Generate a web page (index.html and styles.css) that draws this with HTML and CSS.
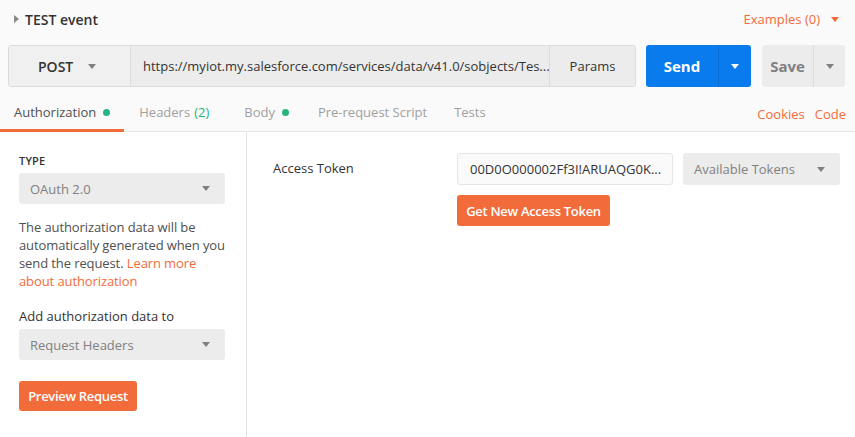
FILE: index.html
```html
<!DOCTYPE html>
<html>
<head>
<meta charset="utf-8">
<link rel="stylesheet" href="styles.css">
</head>
<body>
<div class="app">
  <div class="header">
    <div class="title"><span class="caret-right"></span>TEST event</div>
    <div class="examples">Examples (0) <span class="tri tri-orange"></span></div>
  </div>
  <div class="reqbar">
    <div class="urlgroup">
      <div class="method">POST <span class="tri tri-grey"></span></div>
      <div class="url">https://myiot.my.salesforce.com/services/data/v41.0/sobjects/Tes...</div>
      <div class="params">Params</div>
    </div>
    <div class="send">
      <div class="send-main">Send</div>
      <div class="send-drop"><span class="tri tri-white"></span></div>
    </div>
    <div class="save">
      <div class="save-main">Save</div>
      <div class="save-drop"><span class="tri tri-grey"></span></div>
    </div>
  </div>
  <div class="tabs">
    <div class="tab tab-auth active">Authorization <span class="dot"></span></div>
    <div class="tab tab-headers">Headers <span class="green">(2)</span></div>
    <div class="tab tab-body">Body <span class="dot"></span></div>
    <div class="tab tab-pre">Pre-request Script</div>
    <div class="tab tab-tests">Tests</div>
    <div class="tab-links"><span>Cookies</span><span>Code</span></div>
  </div>
  <div class="content">
    <div class="side">
      <div class="label-caps">TYPE</div>
      <div class="select">OAuth 2.0 <span class="tri tri-grey"></span></div>
      <p class="desc">The authorization data will be automatically generated when you send the request. <span class="link">Learn more about authorization</span></p>
      <div class="label">Add authorization data to</div>
      <div class="select">Request Headers <span class="tri tri-grey"></span></div>
      <div class="btn-orange preview">Preview Request</div>
    </div>
    <div class="main">
      <div class="row">
        <div class="field-label">Access Token</div>
        <div class="field-col">
          <div class="field-line">
            <div class="token-input">00D0O000002Ff3I!ARUAQG0K...</div>
            <div class="select tokens">Available Tokens <span class="tri tri-grey"></span></div>
          </div>
          <div class="btn-orange getnew">Get New Access Token</div>
        </div>
      </div>
    </div>
  </div>
</div>
</body>
</html>
```
FILE: styles.css
```css
* { box-sizing: border-box; }
html, body { margin: 0; padding: 0; }
body {
  font-family: "Open Sans", "Noto Sans", sans-serif;
  font-size: 13px;
  color: #505050;
  background: #fff;
  width: 855px;
  height: 437px;
  overflow: hidden;
}
.app { display: flex; flex-direction: column; height: 437px; }
.header {
  background: #fafafa;
  height: 38px;
  display: flex;
  align-items: center;
  justify-content: space-between;
  padding: 0 16px 0 14px;
}
.title { font-size: 14px; font-weight: 600; color: #333; display: flex; align-items: center; }
.caret-right {
  display: inline-block;
  width: 0; height: 0;
  border-top: 4px solid transparent;
  border-bottom: 4px solid transparent;
  border-left: 5px solid #888;
  margin-right: 6px;
}
.examples { color: #f26b3a; font-size: 13px; display: flex; align-items: center; }
.examples .tri { margin-left: 11px; }
.tri {
  display: inline-block;
  width: 0; height: 0;
  border-left: 4px solid transparent;
  border-right: 4px solid transparent;
  border-top: 5px solid #808080;
}
.tri-orange { border-top-color: #f26b3a; }
.tri-white { border-top-color: #fff; }
.tri-grey { border-top-color: #808080; }
.reqbar {
  background: #fafafa;
  display: flex;
  align-items: stretch;
  padding: 7px 10px 7px 8px;
  height: 56px;
}
.reqbar > div { height: 42px; }
.urlgroup {
  display: flex;
  width: 628px;
  border: 1px solid #dcdcdc;
  border-radius: 3px;
  background: #ececec;
}
.method {
  width: 122px;
  background: #f0f0f0;
  border-right: 1px solid #dcdcdc;
  display: flex;
  align-items: center;
  font-size: 14px;
  font-weight: 600;
  color: #333;
  gap: 15px;
  padding-left: 29px;
  border-radius: 3px 0 0 3px;
}
.url {
  flex: 1;
  display: flex;
  align-items: center;
  padding-left: 12px;
  color: #333;
  font-size: 13px;
  white-space: nowrap;
  overflow: hidden;
  background: #ececec;
}
.params {
  width: 86px;
  border-left: 1px solid #dcdcdc;
  background: #ececec;
  display: flex;
  align-items: center;
  justify-content: center;
  color: #333;
  border-radius: 0 3px 3px 0;
}
.send {
  margin-left: 10px;
  width: 105px;
  display: flex;
  background: #097bed;
  border-radius: 3px;
  color: #fff;
}
.send-main {
  width: 73px;
  display: flex;
  align-items: center;
  justify-content: center;
  font-weight: 700;
  font-size: 15px;
  border-right: 1px solid #0a6dd6;
}
.send-drop { flex: 1; display: flex; align-items: center; justify-content: center; }
.save {
  margin-left: 11px;
  width: 83px;
  display: flex;
  background: #ececec;
  border-radius: 3px;
  color: #808080;
}
.save-main {
  width: 52px;
  display: flex;
  align-items: center;
  justify-content: center;
  font-weight: 700;
  font-size: 15px;
  border-right: 1px solid #dcdcdc;
}
.save-drop { flex: 1; display: flex; align-items: center; justify-content: center; }
.tabs {
  background: #fafafa;
  height: 38px;
  display: flex;
  align-items: stretch;
  border-bottom: 1px solid #e6e6e6;
}
.tab {
  display: flex;
  align-items: center;
  color: #a0a0a0;
  position: relative;
  padding-bottom: 2px;
}
.tab-auth { padding-left: 14px; padding-right: 14px; }
.tab-headers { padding-left: 15px; padding-right: 17px; }
.tab-body { padding-left: 18px; padding-right: 14px; }
.tab-pre { padding-left: 15px; padding-right: 12px; }
.tab-tests { padding-left: 15px; padding-right: 14px; }
.tab.active { color: #505050; }
.tab.active::after {
  content: "";
  position: absolute;
  left: 0; right: 0; bottom: -1px;
  height: 3px;
  background: #f26b3a;
}
.dot { display: inline-block; width: 7px; height: 7px; border-radius: 50%; background: #26b47f; margin-left: 7px; margin-top: 1px; }
.green { color: #26b47f; margin-left: 4px; }
.tab-links { margin-left: auto; display: flex; align-items: center; gap: 10px; padding: 2px 9px 0 0; color: #f26b3a; }
.content { flex: 1; display: flex; }
.side {
  width: 247px;
  border-right: 1px solid #e6e6e6;
  padding: 21px 21px 0 19px;
}
.label-caps { font-size: 11px; font-weight: 600; color: #333; letter-spacing: 0.2px; margin-bottom: 4px; line-height: 16px; }
.select {
  height: 31px;
  background: #ececec;
  border-radius: 3px;
  display: flex;
  align-items: center;
  justify-content: space-between;
  padding: 0 15px 0 11px;
  color: #808080;
  font-size: 13px;
}
.desc { margin: 14px -4px 0 0; line-height: 18px; color: #505050; font-size: 13px; letter-spacing: -0.1px; }
.link { color: #f26b3a; }
.label { margin-top: 17px; margin-bottom: 4px; line-height: 18px; color: #333; }
.btn-orange {
  background: #f26b3a;
  color: #fff;
  font-weight: 600;
  border-radius: 3px;
  display: inline-flex;
  align-items: center;
  justify-content: center;
  height: 30px;
  font-size: 13px;
  letter-spacing: -0.3px;
}
.preview { margin-top: 21px; width: 118px; }
.main { flex: 1; padding: 21px 15px 0 26px; }
.row { display: flex; }
.field-label { width: 184px; padding-top: 6px; color: #333; }
.field-col { display: flex; flex-direction: column; align-items: flex-start; gap: 10px; }
.field-line { display: flex; gap: 10px; }
.token-input {
  width: 216px;
  height: 32px;
  border: 1px solid #e6e6e6;
  border-radius: 3px;
  background: #fafafa;
  display: flex;
  align-items: center;
  padding-left: 12px;
  color: #333;
}
.tokens { width: 157px; height: 32px; }
.getnew { width: 153px; height: 31px; }
```
